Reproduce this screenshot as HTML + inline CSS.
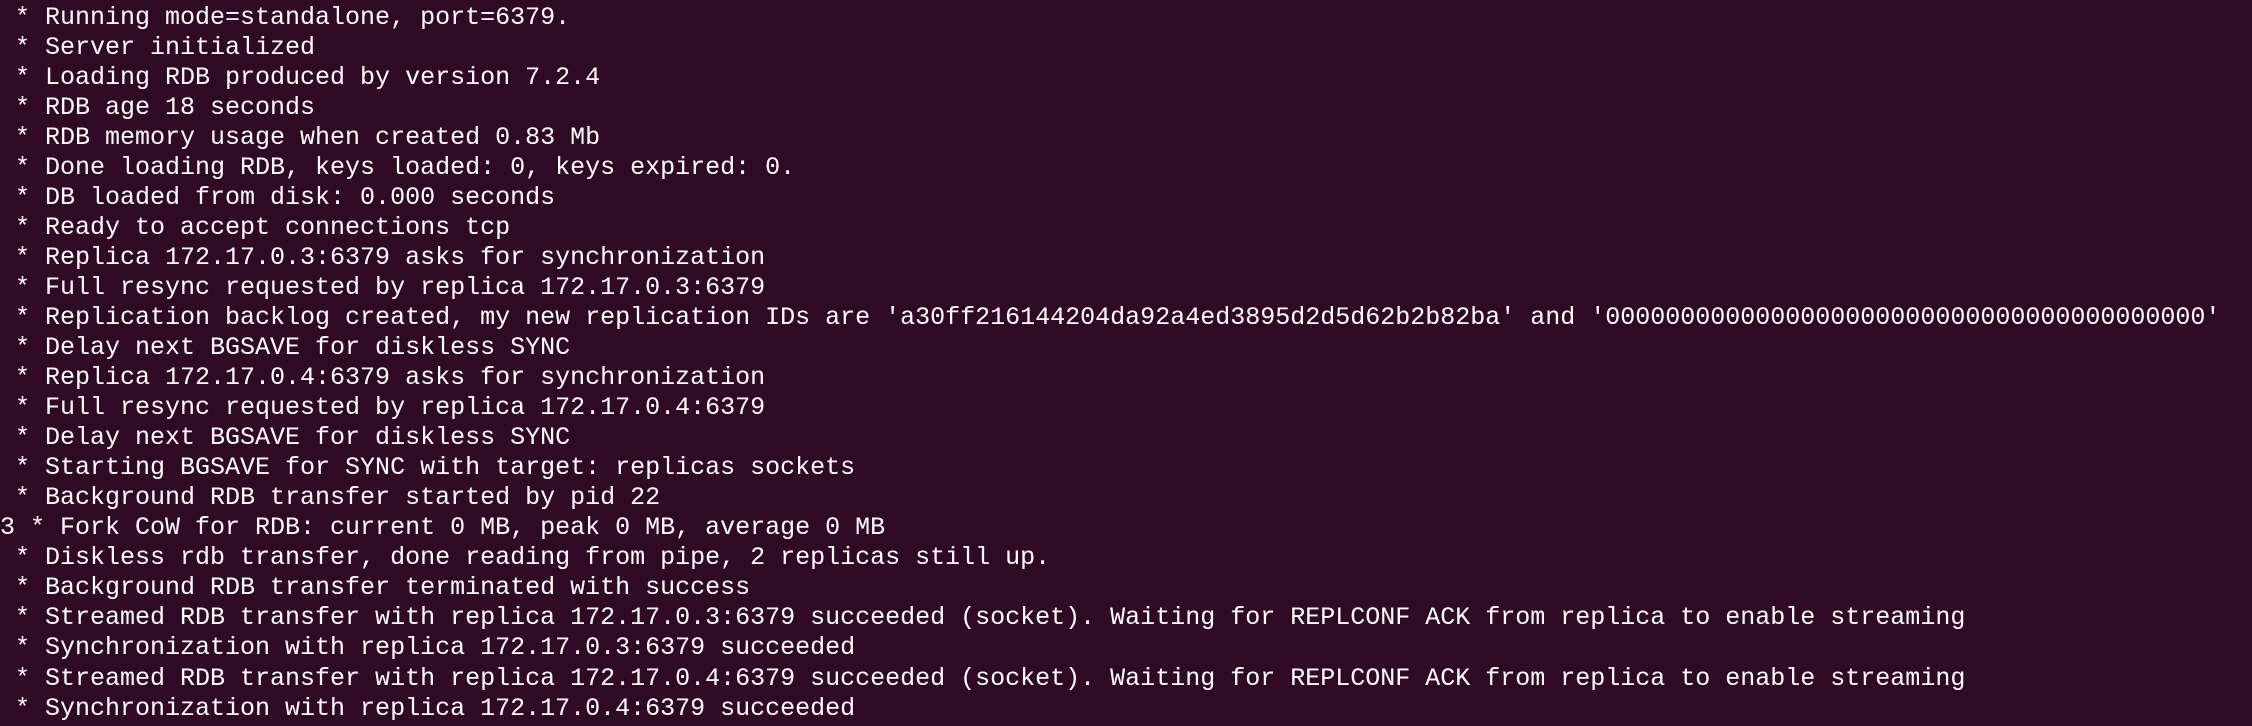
<!DOCTYPE html>
<html><head><meta charset="utf-8"><style>
html,body{margin:0;padding:0;background:#300a24;width:2252px;height:726px;overflow:hidden}
pre{margin:0;padding:2.5px 0 0 0;font-family:"Liberation Mono",monospace;font-size:25px;line-height:30.05px;color:#ffffff;white-space:pre}
</style></head><body><pre> * Running mode=standalone, port=6379.
 * Server initialized
 * Loading RDB produced by version 7.2.4
 * RDB age 18 seconds
 * RDB memory usage when created 0.83 Mb
 * Done loading RDB, keys loaded: 0, keys expired: 0.
 * DB loaded from disk: 0.000 seconds
 * Ready to accept connections tcp
 * Replica 172.17.0.3:6379 asks for synchronization
 * Full resync requested by replica 172.17.0.3:6379
 * Replication backlog created, my new replication IDs are 'a30ff216144204da92a4ed3895d2d5d62b2b82ba' and '0000000000000000000000000000000000000000'
 * Delay next BGSAVE for diskless SYNC
 * Replica 172.17.0.4:6379 asks for synchronization
 * Full resync requested by replica 172.17.0.4:6379
 * Delay next BGSAVE for diskless SYNC
 * Starting BGSAVE for SYNC with target: replicas sockets
 * Background RDB transfer started by pid 22
3 * Fork CoW for RDB: current 0 MB, peak 0 MB, average 0 MB
 * Diskless rdb transfer, done reading from pipe, 2 replicas still up.
 * Background RDB transfer terminated with success
 * Streamed RDB transfer with replica 172.17.0.3:6379 succeeded (socket). Waiting for REPLCONF ACK from replica to enable streaming
 * Synchronization with replica 172.17.0.3:6379 succeeded
 * Streamed RDB transfer with replica 172.17.0.4:6379 succeeded (socket). Waiting for REPLCONF ACK from replica to enable streaming
 * Synchronization with replica 172.17.0.4:6379 succeeded</pre></body></html>
